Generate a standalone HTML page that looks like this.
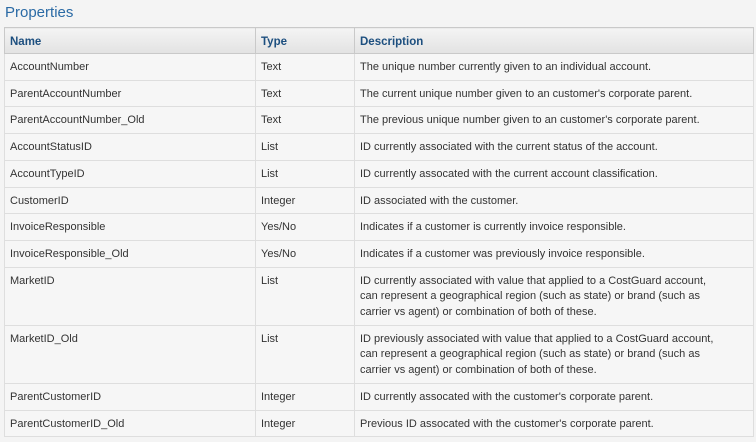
<!DOCTYPE html>
<html><head><meta charset="utf-8"><style>
html,body{margin:0;padding:0;background:#f4f4f4;width:756px;height:442px;overflow:hidden}
body{font-family:"Liberation Sans",sans-serif;color:#333}
h2{position:absolute;left:5px;top:4px;margin:0;font-weight:normal;font-size:15px;color:#2a6aa5}
table{position:absolute;left:4px;top:27px;width:750px;border-collapse:collapse;font-size:11px;border:1px solid #c9c9c9}
th{background:linear-gradient(#f4f4f4,#e2e2e2);color:#1d4f7f;text-align:left;font-weight:bold;font-size:11.5px;height:26px;padding:3px 5px 0 5px;border:1px solid #c9c9c9;box-sizing:border-box}
td{padding:6px 5px 4px 5px;line-height:15.7px;border:1px solid #dedede;vertical-align:top;background:#f6f6f6}
col.a{width:251px}col.b{width:99px}
</style></head><body>
<h2>Properties</h2>
<table>
<colgroup><col class="a"><col class="b"><col></colgroup>
<tr><th>Name</th><th>Type</th><th>Description</th></tr>
<tr><td>AccountNumber</td><td>Text</td><td>The unique number currently given to an individual account.</td></tr>
<tr><td>ParentAccountNumber</td><td>Text</td><td>The current unique number given to an customer's corporate parent.</td></tr>
<tr><td>ParentAccountNumber_Old</td><td>Text</td><td>The previous unique number given to an customer's corporate parent.</td></tr>
<tr><td>AccountStatusID</td><td>List</td><td>ID currently associated with the current status of the account.</td></tr>
<tr><td>AccountTypeID</td><td>List</td><td>ID currently assocated with the current account classification.</td></tr>
<tr><td>CustomerID</td><td>Integer</td><td>ID associated with the customer.</td></tr>
<tr><td>InvoiceResponsible</td><td>Yes/No</td><td>Indicates if a customer is currently invoice responsible.</td></tr>
<tr><td>InvoiceResponsible_Old</td><td>Yes/No</td><td>Indicates if a customer was previously invoice responsible.</td></tr>
<tr><td>MarketID</td><td>List</td><td>ID currently associated with value that applied to a CostGuard account,<br>can represent a geographical region (such as state) or brand (such as<br>carrier vs agent) or combination of both of these.</td></tr>
<tr><td>MarketID_Old</td><td>List</td><td>ID previously associated with value that applied to a CostGuard account,<br>can represent a geographical region (such as state) or brand (such as<br>carrier vs agent) or combination of both of these.</td></tr>
<tr><td>ParentCustomerID</td><td>Integer</td><td>ID currently assocated with the customer's corporate parent.</td></tr>
<tr><td>ParentCustomerID_Old</td><td>Integer</td><td>Previous ID assocated with the customer's corporate parent.</td></tr>
</table>
</body></html>
